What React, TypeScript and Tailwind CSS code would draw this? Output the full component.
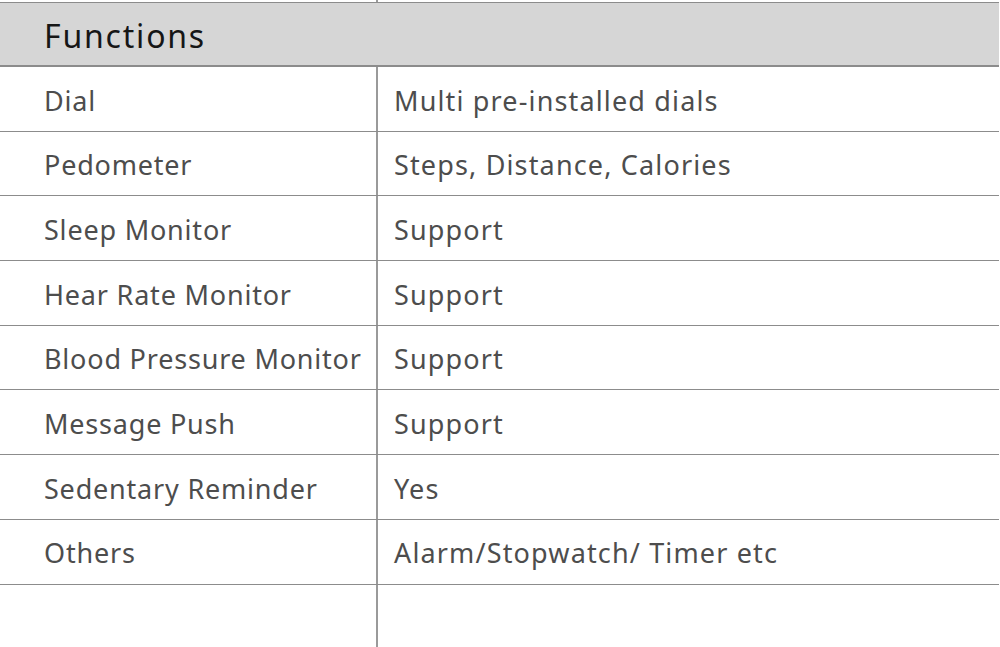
const rows = [
  ["Dial", "Multi pre-installed dials"],
  ["Pedometer", "Steps, Distance, Calories"],
  ["Sleep Monitor", "Support"],
  ["Hear Rate Monitor", "Support"],
  ["Blood Pressure Monitor", "Support"],
  ["Message Push", "Support"],
  ["Sedentary Reminder", "Yes"],
  ["Others", "Alarm/Stopwatch/ Timer etc"],
];

export default function App() {
  return (
    <div
      className="w-[1000px] h-[647px] overflow-hidden bg-white"
      style={{ fontFamily: '"Noto Sans", "Open Sans", sans-serif' }}
    >
      {/* tiny strip above the header */}
      <div className="h-[2px] flex">
        <div className="w-[376px]" />
        <div className="w-[2px] bg-[#9a9a9a]" />
      </div>

      {/* Header */}
      <div className="w-[999px] h-[65px] bg-[#d6d6d6] border-t border-b-2 border-[#8c8c8c] flex items-center pl-[44px] pt-[3px]">
        <span className="text-[32px] tracking-[1.8px] text-[#161616]">Functions</span>
      </div>

      {/* Rows */}
      {rows.map(([name, value]) => (
        <div key={name} className="w-[999px] h-[64.7px] flex border-b border-[#8c8c8c] text-[27px] text-[#4d4d4d]">
          <div className="w-[376px] flex items-center pl-[44px] pt-[4px] tracking-[0.8px]">{name}</div>
          <div className="flex-1 border-l-2 border-[#9a9a9a] flex items-center pl-[16px] pt-[4px] tracking-[1.15px]">
            {value}
          </div>
        </div>
      ))}

      {/* empty tail row */}
      <div className="h-[70px] flex">
        <div className="w-[376px]" />
        <div className="border-l-2 border-[#9a9a9a]" />
      </div>
    </div>
  );
}
